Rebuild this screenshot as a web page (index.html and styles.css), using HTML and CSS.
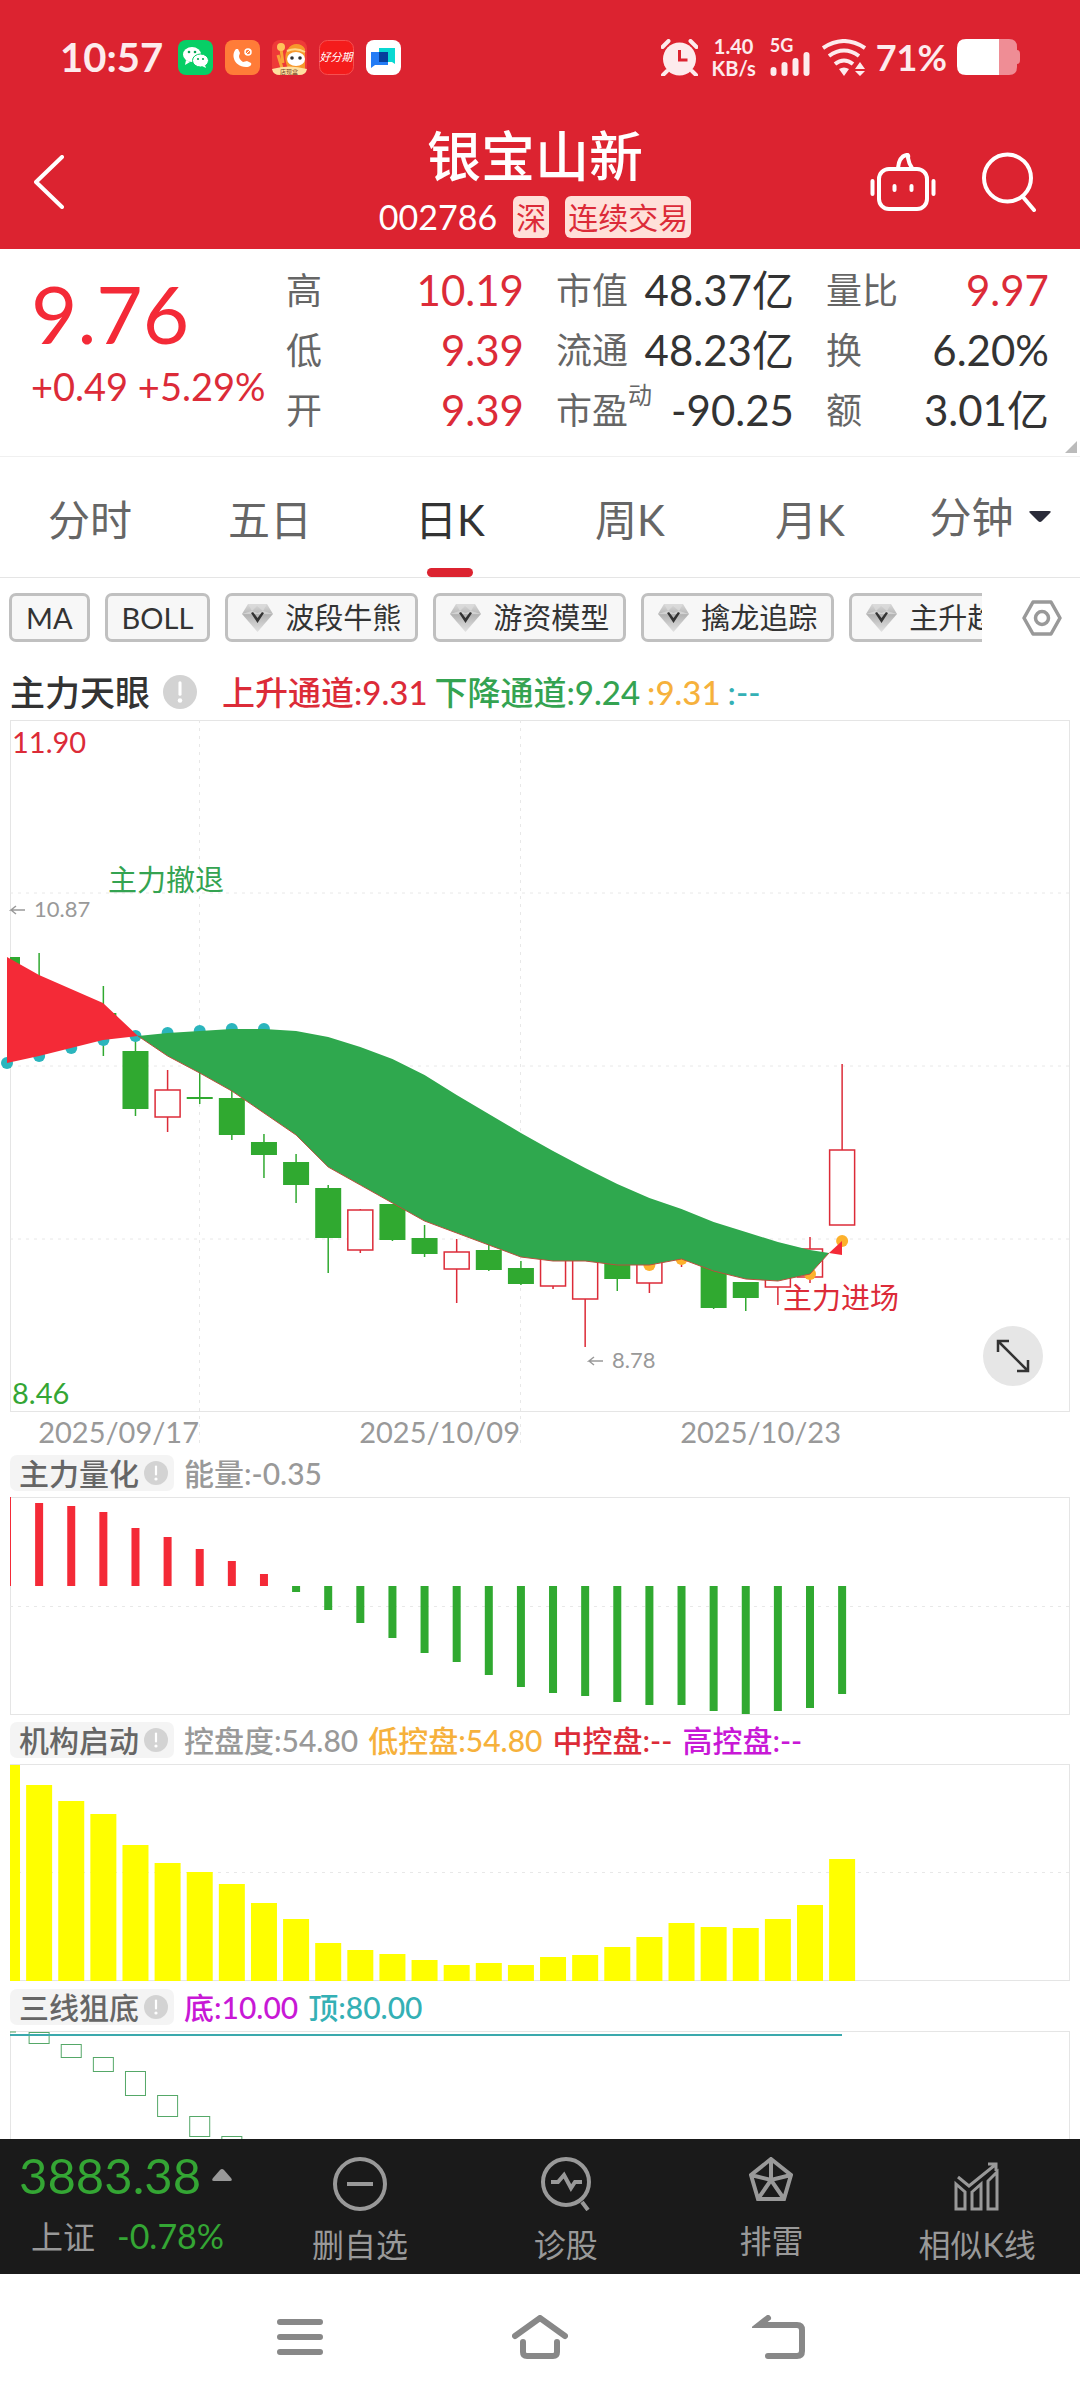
FILE: index.html
```html
<!DOCTYPE html>
<html lang="zh-CN">
<head>
    <meta charset="UTF-8">
    <meta name="viewport" content="width=device-width, initial-scale=1.0">
    <title>银宝山新 002786</title>
    <link rel="stylesheet" href="styles.css">
</head>
<body>
    <div class="app">
        <header class="header">
            <div class="status-bar">
                <span class="clock">10:57</span>
                <div class="app-icons">
                    <svg viewBox="0 0 35 35"><rect width="35" height="35" rx="8" fill="#07cf66"/><ellipse cx="14" cy="14.500" rx="9" ry="7.500" fill="#fff"/><path d="M8 20l-1 5 5-3z" fill="#fff"/><ellipse cx="22.500" cy="20.500" rx="8" ry="6.500" fill="#fff" stroke="#07cf66"/><path d="M27 25l1 3-4-2z" fill="#fff"/><g fill="#07a552"><circle cx="11" cy="12" r="1.300"/><circle cx="17" cy="12" r="1.300"/><circle cx="20" cy="19" r="1.100"/><circle cx="25" cy="19" r="1.100"/></g></svg>
                    <svg viewBox="0 0 35 35"><rect width="35" height="35" rx="8" fill="#ff7c38"/><path d="M11 9c-5 5-3 17 10 18 4 0 6-2 5-4l-4-2-4 1c-3-2-4-4-4-6l1-3-2-4z" fill="#fff"/><circle cx="23" cy="12" r="3" fill="none" stroke="#fff" stroke-width="1.500"/><path d="M21 14l4-4" stroke="#fff"/></svg>
                    <svg viewBox="0 0 35 35"><rect width="35" height="35" rx="8" fill="#ee3a38"/><path d="M16 29c-3-8-4-15 0-20 4-7 14-6 17 0v20z" fill="#f6982c"/><path d="M6 15l4 13M9 9l2 14" stroke="#f9a43a" stroke-width="3"/><circle cx="9" cy="7" r="4" fill="#ffc35a"/><path d="M15 11q9-4 18 1" fill="none" stroke="#ffd98a" stroke-width="2"/><ellipse cx="24" cy="19" rx="9" ry="7" fill="#fff"/><circle cx="20" cy="18" r="1.800" fill="#333"/><circle cx="28" cy="18" r="1.800" fill="#333"/><path d="M0 29q17-5 35 0-1 6-8 6H8q-7 0-8-6z" fill="#ffe0a0"/><text x="17" y="34" font-size="6" text-anchor="middle" fill="#70401c">店现盒</text></svg>
                    <svg viewBox="0 0 35 35"><rect x=".5" y=".5" width="34" height="34" rx="8" fill="#f41c1c" stroke="#f65050"/><text x="17" y="21" font-size="11" font-style="italic" text-anchor="middle" fill="#fff">好分期</text></svg>
                    <svg viewBox="0 0 35 35"><rect width="35" height="35" rx="8" fill="#fff"/><path d="M13 8h16v16l-3-2H13z" fill="#09d8d2"/><path d="M5 12h17v13H9l-4 3z" fill="#237cf5"/><path d="M13 12h9v10h-9z" fill="#063f9c"/></svg>
                </div>
                <div class="status-right">
                    <svg class="ic-alarm" viewBox="0 0 37 37"><circle cx="18.500" cy="20" r="16.500" fill="#fdebed"/><path d="M1.500 8l6-6M35.500 8l-6-6M6 32l-4 4M31 32l4 4" stroke="#fdebed" stroke-width="4" stroke-linecap="round"/><path d="M18.500 11v10h8" fill="none" stroke="#dc2330" stroke-width="3"/></svg>
                    <span class="speed">1.40<br>KB/s</span>
                    <span class="signal">
                        <small>5G</small>
                        <svg viewBox="0 0 40 24"><path d="M3.500 18v3M14.500 13v8M25.500 9v12M36.500 3v18" stroke="#fdebed" stroke-width="6" stroke-linecap="round"/></svg>
                    </span>
                    <svg class="ic-wifi" viewBox="0 0 44 37"><g fill="none" stroke="#fdebed" stroke-width="4"><path d="M1 9q21-14 42 0"/><path d="M7 17q15-11 30 0"/><path d="M13 25q9-7 18 0"/></g><path d="M17 30q5-3 10 0l-5 7zM33 30l5-7 5 7zM33 32l5 5 5-5z" fill="#fdebed"/></svg>
                    <span class="percent">71%</span>
                    <svg class="ic-battery" viewBox="0 0 63 36"><path d="M42 0h10q8 0 8 8v3q3 0 3 4v6q0 4-3 4v3q0 8-8 8H42z" fill="#ef8d95"/><path d="M9 0h33v36H9q-9 0-9-9V9q0-9 9-9z" fill="#fff"/></svg>
                </div>
            </div>
            <div class="title-bar">
                <button class="icon-btn" aria-label="返回"><svg class="ic-back" viewBox="0 0 30 54"><path d="M28 2L2 27l26 25" fill="none" stroke="#fff" stroke-width="4" stroke-linecap="round" stroke-linejoin="round"/></svg></button>
                <div class="stock-title">
                    <h1>银宝山新</h1>
                    <p><span class="code">002786</span><span class="badge">深</span><span class="badge">连续交易</span></p>
                </div>
                <div class="actions">
                    <button class="icon-btn" aria-label="助手"><svg class="ic-robot" viewBox="0 0 66 58"><g fill="none" stroke="#fff" stroke-width="4"><rect x="9" y="16" width="48" height="40" rx="10"/><path d="M28 15q1-11 8-13 3-1 2 3 1 6 4 10"/></g><path d="M2.500 28v13M63.500 28v13M24.500 33v4M41.500 33v4" stroke="#fff" stroke-width="4" stroke-linecap="round"/></svg></button>
                    <button class="icon-btn" aria-label="搜索"><svg class="ic-search" viewBox="0 0 54 60"><circle cx="25.500" cy="26" r="23.500" fill="none" stroke="#fff" stroke-width="4"/><path d="M41 45l11 13" stroke="#fff" stroke-width="4" stroke-linecap="round"/></svg></button>
                </div>
            </div>
        </header>

        <section class="quote">
            <div class="price">
                <strong>9.76</strong>
                <span>+0.49 +5.29%</span>
            </div>
            <div class="stats">
                <div class="stat"><span>高</span><b class="up">10.19</b></div>
                <div class="stat"><span>市值</span><b>48.37亿</b></div>
                <div class="stat"><span>量比</span><b class="up">9.97</b></div>
                <div class="stat"><span>低</span><b class="up">9.39</b></div>
                <div class="stat"><span>流通</span><b>48.23亿</b></div>
                <div class="stat"><span>换</span><b>6.20%</b></div>
                <div class="stat"><span>开</span><b class="up">9.39</b></div>
                <div class="stat"><span>市盈<sup>动</sup></span><b>-90.25</b></div>
                <div class="stat"><span>额</span><b>3.01亿</b></div>
            </div>
            <i class="corner"></i>
        </section>

        <nav class="tabs">
            <button>分时</button>
            <button>五日</button>
            <button class="active">日K</button>
            <button>周K</button>
            <button>月K</button>
            <div class="minute">
                <select aria-label="分钟"><option>分钟</option></select>
                <svg viewBox="0 0 22 12"><path d="M2 0h18q3 0 1 2l-8 8q-2 2-4 0L1 2Q-1 0 2 0z" fill="#2b2c3a"/></svg>
            </div>
        </nav>

        <div class="chips">
            <div class="chip-list">
                <button class="chip">MA</button>
                <button class="chip">BOLL</button>
                <button class="chip"><svg viewBox="0 0 31 28"><use href="#gem"/></svg>波段牛熊</button>
                <button class="chip"><svg viewBox="0 0 31 28"><use href="#gem"/></svg>游资模型</button>
                <button class="chip"><svg viewBox="0 0 31 28"><use href="#gem"/></svg>擒龙追踪</button>
                <button class="chip"><svg viewBox="0 0 31 28"><use href="#gem"/></svg>主升趋势</button>
            </div>
            <button class="icon-btn" aria-label="设置"><svg class="ic-setting" viewBox="0 0 40 36"><g fill="none" stroke="#999" stroke-width="3.500"><path d="M11 2h18l9 16-9 16H11L2 18z" stroke-linejoin="round"/><circle cx="20" cy="18" r="6.500"/></g></svg></button>
        </div>

        <main class="charts">
            <div class="main-legend">
                <h2>主力天眼</h2>
                <svg class="info" viewBox="0 0 24 24"><use href="#info"/></svg>
                <p><span class="red">上升通道:9.31</span><span class="green">下降通道:9.24</span><span class="orange">:9.31</span><span class="teal">:--</span></p>
            </div>
            <div class="kline">
                <svg id="kline" class="plot" viewBox="0 0 1080 728"></svg>
                <button class="expand" aria-label="全屏"><svg viewBox="0 0 36 36"><path d="M3 14V3h11M3 3l30 30M22 33h11V22" fill="none" stroke="#333" stroke-width="2.500"/></svg></button>
            </div>

            <div class="legend">
                <button class="tag">主力量化<svg class="info" viewBox="0 0 24 24"><use href="#info"/></svg></button>
                <span class="gray">能量:-0.35</span>
            </div>
            <svg id="energy" class="plot" viewBox="0 0 1080 218"></svg>

            <div class="legend">
                <button class="tag">机构启动<svg class="info" viewBox="0 0 24 24"><use href="#info"/></svg></button>
                <span class="gray">控盘度:54.80</span>
                <span class="orange">低控盘:54.80</span>
                <span class="red">中控盘:--</span>
                <span class="purple">高控盘:--</span>
            </div>
            <svg id="control" class="plot" viewBox="0 0 1080 218"></svg>

            <div class="legend">
                <button class="tag">三线狙底<svg class="info" viewBox="0 0 24 24"><use href="#info"/></svg></button>
                <span class="purple">底:10.00</span>
                <span class="teal">顶:80.00</span>
            </div>
            <svg id="sniper" class="plot" viewBox="0 0 1080 218"></svg>
        </main>

        <footer class="toolbar">
            <a class="index" href="#">
                <span class="index-value">3883.38<svg viewBox="0 0 20 12"><path d="M8 1q2-2 4 0l7 8q2 3-1 3H2q-3 0-1-3z" fill="#999"/></svg></span>
                <span class="index-change">上证<em>-0.78%</em></span>
            </a>
            <button>
                <svg viewBox="0 0 54 54"><circle cx="27" cy="27" r="25" /><path d="M14 27h26"/></svg>
                删自选
            </button>
            <button>
                <svg viewBox="0 0 54 54"><circle cx="27" cy="25" r="23"/><path d="M12 25h7l6-7 7 13 4-6h7M43 45l6 8"/></svg>
                诊股
            </button>
            <button class="small">
                <svg viewBox="0 0 44 44"><path d="M22 2l20 16-7 24H9L2 18zM22 2v21M2 18l20 5 20-5M9 42l13-19 13 19"/></svg>
                排雷
            </button>
            <button class="fine">
                <svg viewBox="0 0 54 54"><path d="M6 27l9 8v17H6zM22 35l9-8v25h-9zM38 24l9-9v37h-9zM8 20l11 9 26-21M38 7h8v7"/></svg>
                相似K线
            </button>
        </footer>

        <nav class="system-nav">
            <button aria-label="菜单"><svg viewBox="0 0 56 44"><path d="M8 7h40M8 22h40M8 37h40"/></svg></button>
            <button aria-label="主页"><svg viewBox="0 0 56 44"><path d="M3 21L28 3l25 18M11 27v10q0 4 4 4h26q4 0 4-4V27"/></svg></button>
            <button aria-label="后退"><svg viewBox="0 0 56 44"><path d="M16 3L7 10h38q5 0 5 5v21q0 5-5 5H16"/></svg></button>
        </nav>
    </div>

    <svg class="defs">
        <linearGradient id="gemFill" x1="0" y1="0" x2="0" y2="1">
            <stop offset="0" stop-color="#d8d8d8"/>
            <stop offset=".4" stop-color="#b4b4b4"/>
            <stop offset="1" stop-color="#e2e2e2"/>
        </linearGradient>
        <symbol id="gem" viewBox="0 0 31 28">
            <path d="M6 0h19l6 10-15.500 18L0 10z" fill="url(#gemFill)"/>
            <path d="M6 0l4 7 5-5 6 5 4-7zM0 10l10-3 5.500 2L21 7l10 3" fill="#ddd" opacity=".7"/>
            <path d="M9 9l6.500 10L22 9l-2-1-4.500 6L11 8z" fill="#333"/>
        </symbol>
        <symbol id="info" viewBox="0 0 24 24">
            <circle cx="12" cy="12" r="12" fill="#d3d3d3"/>
            <path d="M12 5.500v8" stroke="#fff" stroke-width="2.200" stroke-linecap="round"/>
            <circle cx="12" cy="18" r="1.600" fill="#fff"/>
        </symbol>
    </svg>
    <script src="chart.js"></script>
</body>
</html>
```

FILE: styles.css
```css
* {
    box-sizing: border-box;
}
body {
    margin: 0;
    background: #fff;
    color: #333;
    font-family: Lato, "Noto Sans CJK SC", sans-serif;
}
button, select {
    border: 0;
    margin: 0;
    padding: 0;
    background: none;
    color: inherit;
    font-family: inherit;
    font-size: inherit;
    line-height: inherit;
    cursor: pointer;
}
svg {
    display: block;
    flex: none;
}
h1, h2, p {
    margin: 0;
}
.app {
    display: flex;
    flex-direction: column;
    height: 100vh;
}
.defs {
    position: absolute;
    width: 0;
    height: 0;
}
.red { color: #dc2b38; }
.green { color: #34a351; }
.orange { color: #f6b13c; }
.teal { color: #34b0b5; }
.purple { color: #c818d6; }
.gray { color: #999; }

/* 顶部 */
.header {
    flex: none;
    background: #dc2330;
    color: #fff;
    padding: 32px 44px 7px 34px;
}
.status-bar {
    display: flex;
    align-items: center;
    height: 50px;
    padding-left: 26px;
    color: #fdebed;
}
.clock {
    font-size: 40px;
    line-height: 50px;
    font-weight: 700;
}
.app-icons {
    display: flex;
    gap: 12px;
    margin-left: 15px;
}
.app-icons svg {
    width: 35px;
    height: 35px;
}
.status-right {
    display: flex;
    align-items: center;
    margin-left: auto;
    padding-right: 16px;
}
.ic-alarm {
    width: 37px;
    height: 37px;
}
.speed {
    margin: 0 14px;
    font-size: 20px;
    line-height: 22px;
    font-weight: 700;
    text-align: center;
}
.signal {
    display: flex;
    flex-direction: column;
    height: 37px;
}
.signal small {
    font-size: 18px;
    line-height: 13px;
    font-weight: 700;
}
.signal svg {
    width: 40px;
    height: 24px;
}
.ic-wifi {
    width: 44px;
    height: 37px;
    margin: 0 10px 0 12px;
}
.percent {
    font-size: 36px;
    line-height: 50px;
    font-weight: 700;
}
.ic-battery {
    width: 63px;
    height: 36px;
    margin-left: 10px;
}
.title-bar {
    display: grid;
    grid-template-columns: 1fr auto 1fr;
    align-items: center;
    margin-top: 40px;
}
.icon-btn {
    justify-self: start;
}
.ic-back {
    width: 30px;
    height: 54px;
}
.stock-title h1 {
    font-size: 54px;
    line-height: 70px;
    font-weight: 500;
    text-align: center;
}
.stock-title p {
    display: flex;
    align-items: center;
    justify-content: center;
    height: 50px;
    gap: 16px;
}
.code {
    font-size: 34px;
    line-height: 42px;
}
.badge {
    padding: 0 3px;
    border-radius: 6px;
    background: #ffe0d9;
    color: #dc2b38;
    font-size: 30px;
    line-height: 42px;
}
.actions {
    justify-self: end;
    display: flex;
    align-items: center;
    gap: 46px;
}
.ic-robot {
    width: 66px;
    height: 58px;
}
.ic-search {
    width: 54px;
    height: 60px;
}

/* 行情 */
.quote {
    position: relative;
    flex: none;
    display: flex;
    padding: 11px 31px 16px 31px;
    border-bottom: 1px solid #f0f0f0;
}
.price {
    width: 255px;
    flex: none;
    color: #f42a37;
    white-space: nowrap;
}
.price strong {
    display: block;
    font-size: 80px;
    line-height: 106px;
    font-weight: 400;
}
.price span {
    display: block;
    font-size: 38px;
    line-height: 40px;
    color: #dc2b38;
}
.stats {
    flex: 1;
    display: grid;
    grid-template-columns: 16fr 16fr 15fr;
    column-gap: 32px;
}
.stat {
    display: flex;
    justify-content: space-between;
    height: 60px;
    line-height: 60px;
    font-size: 36px;
    color: #666;
    white-space: nowrap;
}
.stat b {
    font-size: 42px;
    font-weight: 400;
    color: #333;
}
.stat .up {
    color: #dc2b38;
}
.stat sup {
    font-size: 24px;
    line-height: 1;
    vertical-align: 20px;
}
.corner {
    position: absolute;
    right: 3px;
    bottom: 3px;
    border: 6px solid;
    border-color: transparent #bbb #bbb transparent;
}

/* 周期 */
.tabs {
    flex: none;
    display: grid;
    grid-template-columns: repeat(6, 1fr);
    height: 121px;
    border-bottom: 1px solid #e5e5e5;
    font-size: 42px;
    color: #666;
}
.tabs .active {
    position: relative;
    color: #333;
}
.tabs .active::after {
    content: "";
    position: absolute;
    left: 50%;
    bottom: 0;
    width: 46px;
    height: 9px;
    margin-left: -23px;
    border-radius: 5px;
    background: #dc2330;
}
.minute {
    display: flex;
    align-items: center;
    justify-content: center;
    gap: 14px;
}
.minute select {
    appearance: none;
    color: #666;
}
.minute svg {
    width: 22px;
    height: 12px;
}

/* 指标 */
.chips {
    flex: none;
    display: flex;
    align-items: center;
    justify-content: space-between;
    padding: 15px 18px 0 9px;
}
.chip-list {
    flex: 1;
    display: flex;
    gap: 15px;
    margin-right: 40px;
    overflow: hidden;
}
.chip {
    flex: none;
    display: flex;
    align-items: center;
    gap: 12px;
    height: 49px;
    padding: 0 14px;
    border: 3px solid #c0c0c0;
    border-radius: 7px;
    background: #f7f7f7;
    font-size: 29px;
    line-height: 40px;
}
.chip svg {
    width: 31px;
    height: 28px;
}
.ic-setting {
    width: 40px;
    height: 36px;
}

/* 图表 */
.charts {
    flex: 1;
    min-height: 0;
    overflow: hidden;
}
.main-legend {
    display: flex;
    align-items: center;
    height: 78px;
    padding: 22px 0 0 10px;
}
.main-legend h2 {
    font-size: 35px;
    line-height: 48px;
    font-weight: 500;
}
.main-legend .info {
    width: 34px;
    height: 34px;
    margin: 0 25px 0 13px;
}
.main-legend p {
    display: flex;
    gap: 7px;
    font-size: 33px;
    line-height: 48px;
    font-weight: 500;
}
.kline {
    position: relative;
}
.plot {
    width: 100%;
    height: auto;
}
.plot text {
    font-size: 29px;
}
.plot .mark {
    font-size: 22px;
}
.expand {
    position: absolute;
    right: 37px;
    bottom: 62px;
    width: 60px;
    height: 60px;
    display: flex;
    align-items: center;
    justify-content: center;
    border-radius: 50%;
    background: #e6e6e6;
}
.expand svg {
    width: 36px;
    height: 36px;
}
.legend {
    display: flex;
    align-items: center;
    gap: 10px;
    height: 49px;
    padding-left: 10px;
    font-size: 30px;
    font-weight: 500;
    line-height: 36px;
    white-space: nowrap;
}
.tag {
    display: flex;
    align-items: center;
    gap: 5px;
    height: 36px;
    padding: 0 6px 0 9px;
    border-radius: 7px;
    background: #f4f4f4;
    color: #666;
    font-weight: 500;
}
.tag .info {
    width: 24px;
    height: 24px;
}

/* 底部 */
.toolbar {
    flex: none;
    display: grid;
    grid-template-columns: 5fr 4fr 4fr 4fr 4fr;
    height: 135px;
    background: #1a1a1a;
    color: #999;
    font-size: 32px;
}
.toolbar button {
    display: flex;
    flex-direction: column;
    align-items: center;
    gap: 10px;
    padding-top: 18px;
    line-height: 48px;
}
.toolbar button svg {
    width: 54px;
    height: 54px;
    fill: none;
    stroke: #999;
    stroke-width: 4;
}
.toolbar .small svg {
    width: 44px;
    height: 44px;
    margin-bottom: 6px;
}
.toolbar .fine svg {
    stroke-width: 3;
}
.index {
    display: flex;
    flex-direction: column;
    padding: 8px 0 0 19px;
    color: inherit;
    text-decoration: none;
}
.index-value {
    display: flex;
    align-items: center;
    gap: 11px;
    font-size: 49px;
    line-height: 56px;
    color: #34a634;
}
.index-value svg {
    width: 20px;
    height: 12px;
}
.index-change {
    padding-left: 12px;
    line-height: 66px;
}
.index-change em {
    margin-left: 22px;
    font-size: 34px;
    font-style: normal;
    color: #34a634;
}
.system-nav {
    flex: none;
    display: flex;
    justify-content: center;
    gap: 184px;
    height: 126px;
    background: #fff;
}
.system-nav svg {
    width: 56px;
    height: 44px;
    fill: none;
    stroke: #888;
    stroke-width: 6;
    stroke-linecap: round;
}
```

FILE: chart.js
```js
const RED = '#dc2b38';
const GREEN = '#30a930';
const TEAL = '#2bb5bd';
const LEFT = 10;
const RIGHT = 1069;

// 第 i 根 K 线的横坐标
function cx(i) {
    return 7 + i * 32.12;
}

function frame(height) {
    return `<rect x="${LEFT}.5" y="0.5" width="${RIGHT - LEFT}" height="${height}" fill="none" stroke="#e5e5e5"/>`;
}

function dash(x1, y1, x2, y2) {
    return `<path d="M${x1} ${y1}L${x2} ${y2}" stroke="#e8e8e8" stroke-dasharray="3 5"/>`;
}

function bar(x, y, w, h, color) {
    const left = Math.max(x, LEFT);
    return `<rect x="${left}" y="${y}" width="${x + w - left}" height="${h}" fill="${color}"/>`;
}

function points(list) {
    return list.map(p => p.join(',')).join(' ');
}

// [序号, 最高, 实体上沿, 实体下沿, 最低, 是否上涨]
const candles = [
    [0, 237, 237, 300, 300, 0], [1, 233, 262, 300, 320, 0], [3, 266, 293, 315, 336, 0],
    [4, 314, 331, 389, 396, 0], [5, 350, 370, 397, 412, 1], [6, 345, 377, 379, 384, 0],
    [7, 365, 378, 415, 420, 0], [8, 414, 422, 435, 458, 0], [9, 434, 442, 465, 483, 0],
    [10, 465, 468, 518, 553, 0], [11, 489, 490, 530, 533, 1], [12, 484, 484, 520, 521, 0],
    [13, 505, 518, 534, 537, 0], [14, 519, 532, 549, 583, 1], [15, 520, 530, 550, 551, 0],
    [16, 541, 548, 564, 565, 0], [17, 530, 534, 566, 569, 1], [18, 530, 534, 579, 627, 1],
    [19, 535, 538, 559, 571, 0], [20, 530, 534, 563, 573, 1], [21, 530, 532, 537, 547, 1],
    [22, 535, 540, 588, 589, 0], [23, 562, 562, 578, 591, 0], [24, 545, 550, 567, 585, 1],
    [25, 517, 529, 557, 563, 1], [26, 344, 430, 505, 505, 1]
];

const redTop = [[7, 237], [39, 255], [103, 283], [138, 316]];
const redBottom = [[7, 343], [39, 336], [71, 328], [103, 320], [138, 316]];
const upper = [313, 311, 309, 309, 311, 317, 327, 339, 355, 375, 394, 413, 431, 448, 464, 478, 489, 502, 512, 522, 530];
const lower = [336, 353, 371, 393, 415, 447, 465, 483, 501, 513, 525, 537, 541, 541, 545, 545, 539, 551, 559, 561, 554];

function drawKline() {
    let s = frame(691);
    [173, 346, 519].forEach(y => s += dash(LEFT, y, RIGHT, y));
    [199.5, 520.5].forEach(x => s += dash(x, 0, x, 725));

    candles.forEach(([i, high, top, bottom, low, rise]) => {
        const x = cx(i);
        const color = rise ? RED : GREEN;
        if (rise) {
            s += `<path d="M${x} ${high}V${top}M${x} ${bottom}V${low}" stroke="${color}" stroke-width="1.500"/>`;
            s += `<rect x="${x - 12.5}" y="${top}" width="25" height="${bottom - top}" fill="#fff" stroke="${color}" stroke-width="1.500"/>`;
        } else {
            if (i > 0) s += `<path d="M${x} ${high}V${low}" stroke="${color}" stroke-width="1.500"/>`;
            s += bar(x - 13, top, 26, bottom - top, color);
        }
    });

    [343, 336, 328, 320, 316, 313, 311, 309, 309].forEach((y, i) => {
        s += `<circle cx="${cx(i)}" cy="${y}" r="6" fill="${TEAL}"/>`;
    });
    [[20, 545], [21, 539], [25, 554], [26, 521]].forEach(([i, y]) => {
        s += `<circle cx="${cx(i)}" cy="${y}" r="6" fill="#fdb12c"/>`;
    });

    const up = upper.map((y, k) => [cx(k + 5), y]);
    const down = lower.map((y, k) => [cx(k + 5), y]);
    s += `<polygon points="${points([[138, 316], ...up, [829, 533], ...down.slice().reverse()])}" fill="#2fa84e"/>`;
    s += `<polygon points="${points([...redTop, ...redBottom.slice().reverse()])}" fill="#f42a37"/>`;
    s += `<polygon points="829,533 842,521 842,535" fill="#f42a37"/>`;
    s += `<polyline points="${points([[138, 316], ...down, [829, 533]])}" fill="none" stroke="#b8503c"/>`;

    s += `<text x="12" y="33" fill="${RED}">11.90</text>`;
    s += `<text x="12" y="684" fill="#34a634">8.46</text>`;
    s += `<text x="108" y="171" fill="#34a351">主力撤退</text>`;
    s += `<text x="783" y="589" fill="${RED}">主力进场</text>`;
    s += `<path d="M25 190H11l5-4M11 190l5 4M603 641H589l5-4M589 641l5 4" fill="none" stroke="#999" stroke-width="1.500"/>`;
    s += `<text class="mark" x="34" y="197" fill="#999">10.87</text>`;
    s += `<text class="mark" x="612" y="648" fill="#999">8.78</text>`;
    [[199, '2025/09/17'], [520, '2025/10/09'], [841, '2025/10/23']].forEach(([x, date]) => {
        s += `<text x="${x}" y="723" text-anchor="end" fill="#999">${date}</text>`;
    });
    document.getElementById('kline').innerHTML = s;
}

const energy = [89, 83, 80, 74, 58, 49, 37, 25, 12, -6, -24, -37, -52, -67, -76, -89, -101, -107, -110, -116, -119, -119, -125, -128, -125, -122, -108];

function drawEnergy() {
    let s = frame(217) + dash(LEFT, 109.5, RIGHT, 109.5);
    energy.forEach((v, i) => {
        s += bar(cx(i) - 4, v > 0 ? 89 - v : 89, 8, Math.abs(v), v > 0 ? '#f42a37' : GREEN);
    });
    document.getElementById('energy').innerHTML = s;
}

const control = [216, 196, 180, 167, 136, 118, 109, 97, 78, 62, 38, 31, 27, 21, 16, 18, 16, 24, 26, 34, 44, 58, 54, 53, 62, 76, 122];

function drawControl() {
    let s = frame(216) + dash(LEFT, 108.5, RIGHT, 108.5);
    control.forEach((v, i) => {
        s += bar(cx(i) - 13, 217 - v, 26, v, '#ff0');
    });
    document.getElementById('control').innerHTML = s;
}

const boxes = [[1, 12], [13, 26], [26, 40], [40, 64], [64, 85], [85, 105], [105, 125], [125, 140]];

function drawSniper() {
    let s = frame(217);
    boxes.forEach(([top, bottom], k) => {
        s += `<rect x="${cx(k + 1) - 10}" y="${top}.5" width="20" height="${bottom - top}" fill="none" stroke="#55a868"/>`;
    });
    s += `<path d="M${LEFT} 1h6" stroke="#55a868"/>`;
    s += `<path d="M${LEFT} 4H842" stroke="#3ba9ad" stroke-width="2"/>`;
    document.getElementById('sniper').innerHTML = s;
}

drawKline();
drawEnergy();
drawControl();
drawSniper();
```
